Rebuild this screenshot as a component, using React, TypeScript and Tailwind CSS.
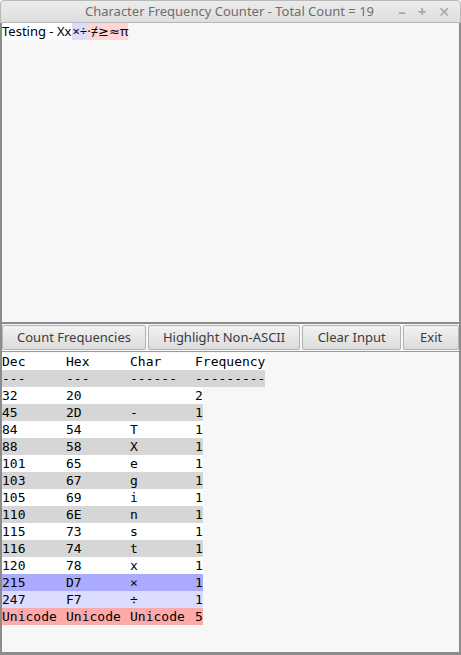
import React from "react";

const uiFont = { fontFamily: '"Noto Sans", "DejaVu Sans", sans-serif' };
const monoFont = { fontFamily: '"DejaVu Sans Mono", "Liberation Mono", monospace' };

type Row = { cells: string[]; bg: string };

const rows: Row[] = [
	{ cells: ["Dec", "Hex", "Char", "Frequency"], bg: "bg-white" },
	{ cells: ["---", "---", "------", "---------"], bg: "bg-[#d6d6d6]" },
	{ cells: ["32", "20", "", "2"], bg: "bg-white" },
	{ cells: ["45", "2D", "-", "1"], bg: "bg-[#d6d6d6]" },
	{ cells: ["84", "54", "T", "1"], bg: "bg-white" },
	{ cells: ["88", "58", "X", "1"], bg: "bg-[#d6d6d6]" },
	{ cells: ["101", "65", "e", "1"], bg: "bg-white" },
	{ cells: ["103", "67", "g", "1"], bg: "bg-[#d6d6d6]" },
	{ cells: ["105", "69", "i", "1"], bg: "bg-white" },
	{ cells: ["110", "6E", "n", "1"], bg: "bg-[#d6d6d6]" },
	{ cells: ["115", "73", "s", "1"], bg: "bg-white" },
	{ cells: ["116", "74", "t", "1"], bg: "bg-[#d6d6d6]" },
	{ cells: ["120", "78", "x", "1"], bg: "bg-white" },
	{ cells: ["215", "D7", "×", "1"], bg: "bg-[#aaaaff]" },
	{ cells: ["247", "F7", "÷", "1"], bg: "bg-[#dcdcff]" },
	{ cells: ["Unicode", "Unicode", "Unicode", "5"], bg: "bg-[#ffaaaa]" },
];

const buttons = [
	{ label: "Count Frequencies", w: "w-[145px]" },
	{ label: "Highlight Non-ASCII", w: "w-[153px]" },
	{ label: "Clear Input", w: "w-[100px]" },
	{ label: "Exit", w: "w-[56px]" },
];

const App = () => {
	return (
		<div className="w-[461px] h-[655px] flex flex-col bg-[#f7f7f7] overflow-hidden">
			{/* title bar */}
			<div
				className="h-[23px] shrink-0 flex items-center relative rounded-t-[4px] border border-[#b8b8b8] bg-gradient-to-b from-[#ececec] to-[#dedede]"
				style={uiFont}>
				<div className="w-full text-center text-[13px] text-[#6e6e6e] leading-none pr-[2px]">
					Character Frequency Counter - Total Count = 19
				</div>
				<div className="absolute right-[10px] top-0 h-full flex items-center gap-[12px] text-[#a4a4a4] text-[15px] font-bold">
					<span>–</span>
					<span>+</span>
					<span className="text-[14px]">✕</span>
				</div>
			</div>

			<div className="flex-1 flex flex-col border-l-2 border-r-2 border-b-[3px] border-[#8c8c8c]">
				{/* input text area */}
				<div className="h-[301px] shrink-0 border-b-2 border-[#8c8c8c]" style={uiFont}>
					<div className="flex text-[13px] leading-[17px] text-black">
						<span className="bg-white pr-[1px]">Testing - Xx</span>
						<span className="bg-[#dcdcff]">×÷</span>
						<span className="bg-[#ffd6d6]">·≠≥≈π</span>
					</div>
				</div>

				{/* buttons */}
				<div className="h-[28px] shrink-0 flex gap-[2px] pt-[1px] pb-[1px] border-b border-[#9a9a9a]" style={uiFont}>
					{buttons.map((b) => (
						<div
							key={b.label}
							className={`${b.w} h-full flex items-center justify-center rounded-[2px] border border-[#b4b4b4] bg-gradient-to-b from-[#f2f2f2] to-[#dcdcdc] text-[13px] text-[#3c3c3c]`}>
							{b.label}
						</div>
					))}
				</div>

				{/* frequency table */}
				<div className="flex-1 pt-[1px] flex flex-col items-start text-[13px] leading-[17px] text-black" style={monoFont}>
					{rows.map((r, i) => (
						<div key={i} className={`flex ${r.bg}`}>
							<span className="w-[64px] whitespace-pre">{r.cells[0]}</span>
							<span className="w-[64px] whitespace-pre">{r.cells[1]}</span>
							<span className="w-[65px] whitespace-pre">{r.cells[2]}</span>
							<span className="whitespace-pre">{r.cells[3]}</span>
						</div>
					))}
				</div>
			</div>
		</div>
	);
};

export default App;
